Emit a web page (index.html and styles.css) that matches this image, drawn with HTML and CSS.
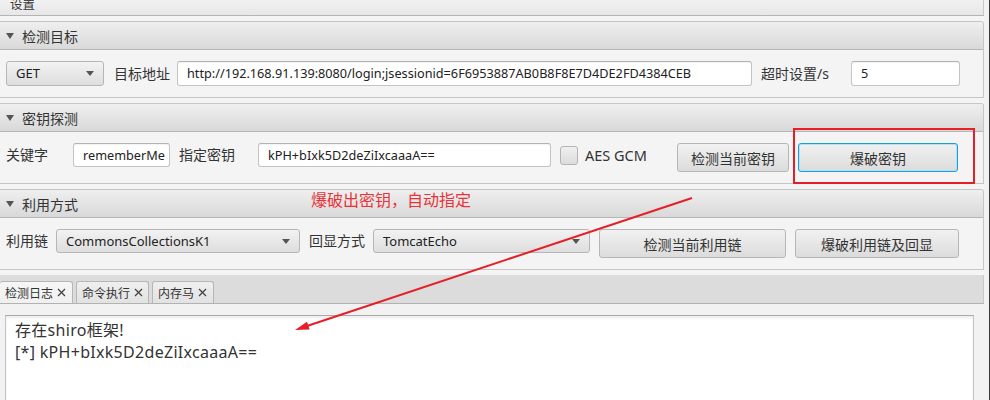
FILE: index.html
```html
<!DOCTYPE html>
<html lang="zh-CN">
<head>
<meta charset="utf-8">
<title>设置</title>
<link rel="stylesheet" href="styles.css">
</head>
<body>
<div class="app">
  <div class="main">
    <div class="topbar"><span class="topbar-title">设置</span></div>

    <section class="pane">
      <div class="pane-head"><span class="caret"></span><span class="pane-title">检测目标</span></div>
      <div class="pane-body r25">
        <div class="combo w-method"><span>GET</span><span class="arrow"></span></div>
        <span class="lbl w-l-url">目标地址</span>
        <div class="field w-url">http://192.168.91.139:8080/login;jsessionid=6F6953887AB0B8F8E7D4DE2FD4384CEB</div>
        <span class="lbl w-l-timeout">超时设置/s</span>
        <div class="field w-timeout">5</div>
      </div>
    </section>

    <section class="pane">
      <div class="pane-head"><span class="caret"></span><span class="pane-title">密钥探测</span></div>
      <div class="pane-body">
        <span class="lbl w-l-kw">关键字</span>
        <div class="field w-kw">rememberMe</div>
        <span class="lbl w-l-key">指定密钥</span>
        <div class="field w-key">kPH+bIxk5D2deZiIxcaaaA==</div>
        <span class="check"></span>
        <span class="lbl w-l-aes">AES GCM</span>
        <div class="btn w-b-check">检测当前密钥</div>
        <div class="btn focus w-b-brute">爆破密钥</div>
      </div>
    </section>

    <section class="pane">
      <div class="pane-head"><span class="caret"></span><span class="pane-title">利用方式</span></div>
      <div class="pane-body">
        <span class="lbl w-l-chain">利用链</span>
        <div class="combo w-chain"><span>CommonsCollectionsK1</span><span class="arrow"></span></div>
        <span class="lbl w-l-echo">回显方式</span>
        <div class="combo w-echo"><span>TomcatEcho</span><span class="arrow"></span></div>
        <div class="btn w-b-chain">检测当前利用链</div>
        <div class="btn w-b-brute2">爆破利用链及回显</div>
      </div>
    </section>

    <div class="tabs-head">
      <div class="tab active w-t1">检测日志<svg class="x" width="9" height="9" viewBox="0 0 9 9"><path d="M1 1L8 8M8 1L1 8"/></svg></div>
      <div class="tab w-t2">命令执行<svg class="x" width="9" height="9" viewBox="0 0 9 9"><path d="M1 1L8 8M8 1L1 8"/></svg></div>
      <div class="tab w-t3">内存马<svg class="x" width="9" height="9" viewBox="0 0 9 9"><path d="M1 1L8 8M8 1L1 8"/></svg></div>
    </div>
    <div class="tab-body">
      <div class="log">
        <div>存在shiro框架!</div>
        <div>[*] kPH+bIxk5D2deZiIxcaaaA==</div>
      </div>
    </div>
  </div>
  <div class="edge"></div>

  <svg class="overlay" width="990" height="400" viewBox="0 0 990 400">
    <rect x="794" y="129" width="180" height="54" fill="none" stroke="#e61e25" stroke-width="2"/>
    <line x1="692" y1="198" x2="304" y2="327" stroke="#e61e25" stroke-width="2"/>
    <polygon points="295,330 309.6,329.4 307,321.8" fill="#e61e25"/>
  </svg>
  <div class="note">爆破出密钥，自动指定</div>
</div>
</body>
</html>
```

FILE: styles.css
```css
* { box-sizing: border-box; }

body {
  margin: 0;
  background: #f4f4f4;
  font-family: "Noto Sans", "Noto Sans CJK SC", sans-serif;
  color: #333;
}

.app {
  position: relative;
  width: 990px;
  height: 400px;
  overflow: hidden;
  display: flex;
}

.main {
  width: 984px;
  display: flex;
  flex-direction: column;
}

.main > * { flex-shrink: 0; }

.edge {
  width: 6px;
  border-right: 1px solid #3a3a3a;
  background: #f2f2f2;
}

.topbar {
  height: 16px;
  border-bottom: 1px solid #b4b4b4;
  border-right: 1px solid #c8c8c8;
  background: linear-gradient(#f1f1f1, #e7e7e7);
  overflow: hidden;
  padding-left: 10px;
  margin-bottom: 5px;
}

.topbar-title {
  display: block;
  font-size: 12.5px;
  line-height: 13px;
  margin-top: -2px;
}

.pane {
  border: 1px solid #c6c6c6;
  border-left: 0;
  border-radius: 0 3px 0 0;
  margin-bottom: 5px;
  background: #f4f4f4;
}

.pane-head {
  height: 28px;
  border-bottom: 1px solid #b5b5b5;
  background: linear-gradient(#efefef, #d9d9d9);
  display: flex;
  align-items: center;
  padding-left: 6px;
  border-radius: 0 3px 0 0;
}

.caret {
  width: 0;
  height: 0;
  border-left: 4.5px solid transparent;
  border-right: 4.5px solid transparent;
  border-top: 6px solid #555;
  margin-right: 8px;
}

.pane-title {
  font-size: 14px;
  color: #333;
}

.pane-body {
  display: flex;
  align-items: flex-start;
  padding: 11px 0 11px 6px;
}

.lbl {
  font-size: 14px;
  line-height: 24px;
  white-space: nowrap;
  color: #333;
}

.r25 .lbl { line-height: 25px; }

.field {
  background: #fff;
  border: 1px solid #c4c4c4;
  border-top-color: #b2b2b2;
  border-radius: 3px;
  height: 24px;
  padding-left: 9px;
  font-size: 12.7px;
  line-height: 22px;
  color: #222;
  box-shadow: inset 0 1px 1px rgba(0, 0, 0, 0.05);
  white-space: nowrap;
  overflow: hidden;
}

.r25 .field, .r25 .combo { height: 25px; line-height: 23px; }

.combo {
  height: 24px;
  border: 1px solid #b6b6b6;
  border-radius: 3px;
  background: linear-gradient(#f2f2f2, #dedede);
  display: flex;
  align-items: center;
  justify-content: space-between;
  padding: 0 9px 0 9px;
  font-size: 13px;
  color: #222;
}

.arrow {
  width: 0;
  height: 0;
  border-left: 4.5px solid transparent;
  border-right: 4.5px solid transparent;
  border-top: 5px solid #555;
}

.btn {
  height: 29px;
  border: 1px solid #b6b6b6;
  border-radius: 3px;
  background: linear-gradient(#f1f1f1, #dcdcdc);
  font-size: 14px;
  display: flex;
  align-items: center;
  justify-content: center;
  color: #333;
  white-space: nowrap;
}

.btn.focus {
  border-color: #1a9fd6;
  box-shadow: inset 0 0 0 1px #b8def0;
}

.check {
  width: 18px;
  height: 19px;
  margin: 3px 0 0 9px;
  border: 1px solid #b4b4b4;
  border-radius: 3px;
  background: linear-gradient(#f0f0f0, #dcdcdc);
}

/* widths */
.w-method { width: 98px; }
.w-l-url { width: 63px; margin-left: 10px; }
.w-url { width: 575px; }
.w-l-timeout { width: 90px; margin-left: 9px; }
.w-timeout { width: 109px; }

.w-l-kw { width: 67px; }
.w-kw { width: 97px; }
.w-l-key { width: 79px; margin-left: 9px; }
.w-key { width: 293px; }
.w-l-aes { width: 92px; margin-left: 7px; font-size: 14.5px; }
.w-b-check { width: 112px; }
.w-b-brute { width: 160px; margin-left: 9px; }

.w-l-chain { width: 50px; }
.w-chain { width: 244px; }
.w-l-echo { width: 64px; margin-left: 9px; }
.w-echo { width: 217px; }
.w-b-chain { width: 187px; margin-left: 9px; }
.w-b-brute2 { width: 164px; margin-left: 9px; }

/* tabs */
.tabs-head {
  height: 29px;
  background: #dcdcdc;
  border-right: 1px solid #c8c8c8;
  border-bottom: 1px solid #b2b2b2;
  display: flex;
  align-items: flex-end;
  gap: 3px;
}

.tab {
  height: 22px;
  border: 1px solid #b6b6b6;
  border-bottom: 0;
  border-radius: 3px 3px 0 0;
  background: linear-gradient(#efefef, #e2e2e2);
  font-size: 12px;
  display: flex;
  align-items: center;
  padding-left: 5px;
  color: #333;
  white-space: nowrap;
}

.tab.active {
  background: linear-gradient(#f6f6f6, #f0f0f0);
  border-left: 0;
}

.w-t1 { width: 73px; }
.w-t2 { width: 73px; }
.w-t3 { width: 62px; }

.x {
  margin-left: 4px;
  stroke: #444;
  stroke-width: 1.3;
  fill: none;
}

.tab-body {
  flex: 1;
  background: #f2f2f2;
  padding: 11px 10px 0 5px;
}

.log {
  background: #fff;
  border: 1px solid #c4c4c4;
  border-top-color: #aaaaaa;
  height: 100px;
  padding: 3px 9px;
  font-size: 16px;
  line-height: 22px;
  letter-spacing: 0.3px;
  color: #333;
  box-shadow: inset 0 2px 3px rgba(0, 0, 0, 0.08);
}

/* annotations */
.overlay {
  position: absolute;
  left: 0;
  top: 0;
  pointer-events: none;
}

.note {
  position: absolute;
  left: 311px;
  top: 190px;
  font-size: 16px;
  line-height: 20px;
  color: #e8333a;
  white-space: nowrap;
}
```
